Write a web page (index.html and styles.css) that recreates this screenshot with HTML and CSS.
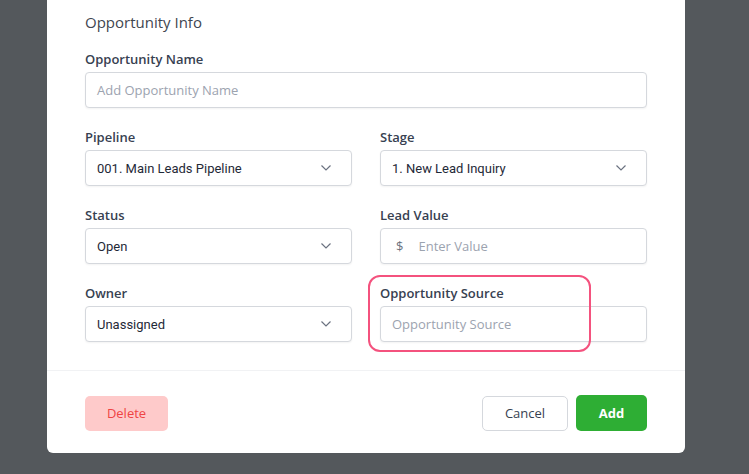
FILE: index.html
```html
<!DOCTYPE html>
<html>
<head>
<meta charset="utf-8">
<link rel="stylesheet" href="styles.css">
</head>
<body>
<div class="modal">
  <div class="modal-body">
    <h2 class="section-title">Opportunity Info</h2>
    <div class="field full">
      <label class="label">Opportunity Name</label>
      <div class="input"><span class="placeholder">Add Opportunity Name</span></div>
    </div>
    <div class="grid">
      <div class="field">
        <label class="label">Pipeline</label>
        <div class="input select"><span class="value">001. Main Leads Pipeline</span>
          <svg class="chev" width="10" height="6" viewBox="0 0 10 6"><polyline points="0.5,0.5 5,5 9.5,0.5" fill="none" stroke="#6b7280" stroke-width="1.2"/></svg>
        </div>
      </div>
      <div class="field">
        <label class="label">Stage</label>
        <div class="input select"><span class="value">1. New Lead Inquiry</span>
          <svg class="chev" width="10" height="6" viewBox="0 0 10 6"><polyline points="0.5,0.5 5,5 9.5,0.5" fill="none" stroke="#6b7280" stroke-width="1.2"/></svg>
        </div>
      </div>
      <div class="field">
        <label class="label">Status</label>
        <div class="input select"><span class="value">Open</span>
          <svg class="chev" width="10" height="6" viewBox="0 0 10 6"><polyline points="0.5,0.5 5,5 9.5,0.5" fill="none" stroke="#6b7280" stroke-width="1.2"/></svg>
        </div>
      </div>
      <div class="field">
        <label class="label">Lead Value</label>
        <div class="input"><span class="currency">$</span><span class="placeholder">Enter Value</span></div>
      </div>
      <div class="field">
        <label class="label">Owner</label>
        <div class="input select"><span class="value">Unassigned</span>
          <svg class="chev" width="10" height="6" viewBox="0 0 10 6"><polyline points="0.5,0.5 5,5 9.5,0.5" fill="none" stroke="#6b7280" stroke-width="1.2"/></svg>
        </div>
      </div>
      <div class="field highlighted">
        <label class="label">Opportunity Source</label>
        <div class="input"><span class="placeholder">Opportunity Source</span></div>
        <div class="highlight"></div>
      </div>
    </div>
  </div>
  <div class="modal-footer">
    <button class="btn btn-delete">Delete</button>
    <div class="actions">
      <button class="btn btn-cancel">Cancel</button>
      <button class="btn btn-add">Add</button>
    </div>
  </div>
</div>
</body>
</html>
```

FILE: styles.css
```css
* { box-sizing: border-box; }
html, body { margin: 0; padding: 0; }
body {
  background: #54585c;
  font-family: "Open Sans", "Noto Sans", sans-serif;
  width: 749px;
  height: 474px;
  overflow: hidden;
}
.modal {
  margin-left: 47px;
  width: 638px;
  background: #ffffff;
  border-radius: 0 0 6px 6px;
}
.modal-body {
  padding: 12px 38px 28px 38px;
}
.section-title {
  margin: 0 0 18px 0;
  font-size: 15px;
  line-height: 20px;
  font-weight: 400;
  color: #3f4650;
}
.field {
  display: flex;
  flex-direction: column;
  position: relative;
}
.label {
  font-size: 13px;
  line-height: 18px;
  font-weight: 600;
  color: #374151;
  margin-bottom: 4px;
}
.input {
  height: 36px;
  border: 1px solid #d5d8dd;
  border-radius: 4px;
  box-shadow: 0 1px 2px rgba(0,0,0,0.05);
  display: flex;
  align-items: center;
  padding: 0 11px;
  font-size: 13px;
  background: #fff;
}
.placeholder { color: #9ca3af; }
.value { color: #1f2937; flex: 1; font-family: "Roboto", "Open Sans", sans-serif; }
.select { padding-right: 20px; }
.chev { flex: none; }
.currency { color: #6b7280; margin-right: 15px; margin-left: 4px; }
.grid {
  margin-top: 20px;
  display: grid;
  grid-template-columns: 1fr 1fr;
  column-gap: 28px;
  row-gap: 20px;
}
.highlight {
  position: absolute;
  left: -12px;
  top: -9px;
  width: 223px;
  height: 77px;
  border: 2.5px solid #f4527e;
  border-radius: 12px;
  pointer-events: none;
}
.modal-footer {
  border-top: 1px solid #f1f2f4;
  padding: 24px 38px 22px 38px;
  display: flex;
  justify-content: space-between;
  align-items: center;
}
.actions { display: flex; gap: 8px; align-items: center; }
.btn {
  font-family: "Open Sans", "Noto Sans", sans-serif;
  font-size: 13px;
  height: 36px;
  border-radius: 5px;
  border: 1px solid transparent;
  cursor: pointer;
}
.btn-delete {
  width: 83px;
  height: 35px;
  background: #fecaca;
  color: #ef4444;
}
.btn-cancel {
  width: 86px;
  height: 35px;
  background: #fff;
  border-color: #d5d8dd;
  color: #374151;
  font-weight: 500;
}
.btn-add {
  width: 71px;
  background: #2eae34;
  color: #fff;
  font-weight: 700;
}
```
